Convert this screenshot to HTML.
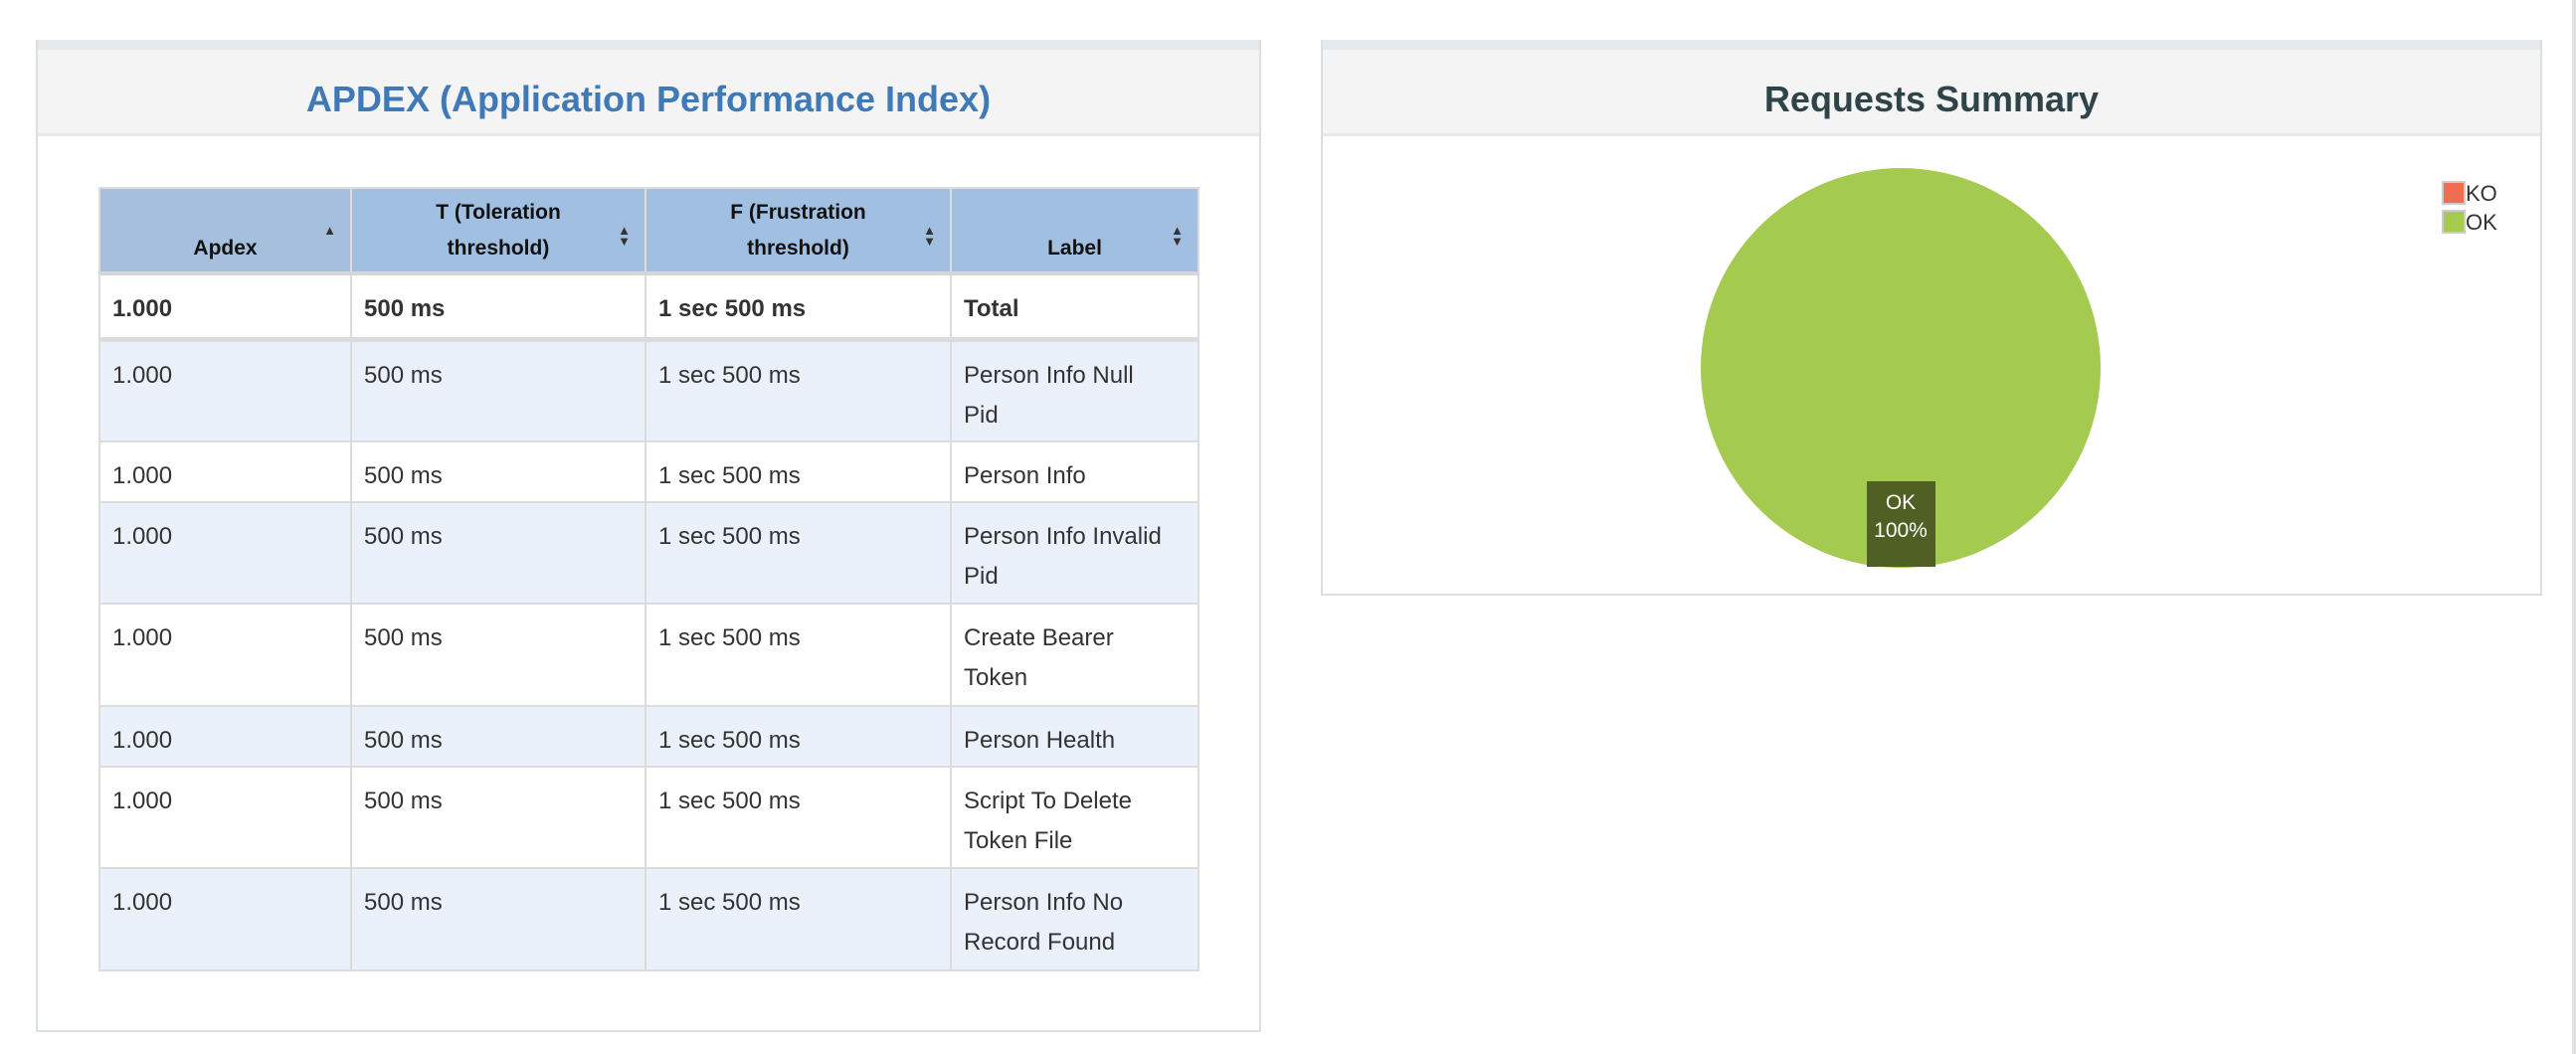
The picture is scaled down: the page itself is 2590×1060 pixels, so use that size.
<!DOCTYPE html>
<html><head><meta charset="utf-8"><style>
body{margin:0;width:2590px;height:1060px;background:#fff;font-family:"Liberation Sans",sans-serif;position:relative;overflow:hidden}
.panel{position:absolute;border:2px solid #dcdfe2;border-top:none;background:#fff;box-sizing:border-box}
.ptop{position:absolute;left:0;right:0;top:0;height:10px;background:#e6e9eb}
.phead{position:absolute;left:0;right:0;top:10px;height:84px;background:#f4f4f4;border-bottom:3px solid #e6e9eb;text-align:center;font-weight:bold;font-size:36px;line-height:100px;overflow:hidden}
table{position:absolute;left:61px;top:148px;border-collapse:collapse;table-layout:fixed;font-size:24px;color:#333}
td,th{border:2px solid #dcdcdc;padding:0 12px;vertical-align:top;text-align:left}
td:last-child{padding-right:30px}
th{background:#a0bfe1;font-size:21px;text-align:center;vertical-align:bottom;padding-bottom:5px;line-height:36px;position:relative;color:#111}
th:first-child{background:#a5bfdc}
td{padding-top:14px;line-height:40px}
tr.s td{background:#eaf1fa}
tr.t td{font-weight:bold;border-bottom:5px solid #dcdcdc}
thead th{border-bottom:4px solid #d6d6d6}
.ar{position:absolute;right:14px;top:36px;font-size:13px;line-height:11px;color:#333}
</style></head><body>
<div class="panel" style="left:36px;top:40px;width:1232px;height:998px">
<div class="ptop"></div>
<div class="phead" style="color:#3f7ab7">APDEX (Application Performance Index)</div>
<table>
<colgroup><col style="width:253px"><col style="width:296px"><col style="width:307px"><col style="width:249px"></colgroup>
<thead><tr style="height:86px"><th>Apdex<span class="ar">▲</span></th><th>T (Toleration<br>threshold)<span class="ar">▲<br>▼</span></th><th>F (Frustration<br>threshold)<span class="ar">▲<br>▼</span></th><th>Label<span class="ar">▲<br>▼</span></th></tr></thead>
<tbody>
<tr class="t" style="height:66px"><td>1.000</td><td>500 ms</td><td>1 sec 500 ms</td><td>Total</td></tr>
<tr class="s" style="height:103px"><td>1.000</td><td>500 ms</td><td>1 sec 500 ms</td><td>Person Info Null Pid</td></tr>
<tr style="height:61px"><td>1.000</td><td>500 ms</td><td>1 sec 500 ms</td><td>Person Info</td></tr>
<tr class="s" style="height:102px"><td>1.000</td><td>500 ms</td><td>1 sec 500 ms</td><td>Person Info Invalid Pid</td></tr>
<tr style="height:103px"><td>1.000</td><td>500 ms</td><td>1 sec 500 ms</td><td>Create Bearer Token</td></tr>
<tr class="s" style="height:61px"><td>1.000</td><td>500 ms</td><td>1 sec 500 ms</td><td>Person Health</td></tr>
<tr style="height:102px"><td>1.000</td><td>500 ms</td><td>1 sec 500 ms</td><td>Script To Delete Token File</td></tr>
<tr class="s" style="height:103px"><td>1.000</td><td>500 ms</td><td>1 sec 500 ms</td><td>Person Info No Record Found</td></tr>
</tbody></table>
</div>
<div class="panel" style="left:1328px;top:40px;width:1228px;height:559px">
<div class="ptop"></div>
<div class="phead" style="color:#2f4448">Requests Summary</div>
</div>
<svg style="position:absolute;left:0;top:0" width="2590" height="1060">
<circle cx="1911" cy="370" r="201" fill="#a5ca50"/>
<rect x="1877" y="484" width="69" height="86" fill="#506024"/>
<text x="1911" y="512" fill="#fff" font-family="Liberation Sans" font-size="21" text-anchor="middle">OK</text>
<text x="1911" y="540" fill="#fff" font-family="Liberation Sans" font-size="21" text-anchor="middle">100%</text>
<rect x="2456" y="183" width="22" height="22" fill="#ef6d53" stroke="#ccc" stroke-width="2"/>
<rect x="2456" y="212" width="22" height="22" fill="#a5ca50" stroke="#ccc" stroke-width="2"/>
<text x="2479" y="202" fill="#333" font-family="Liberation Sans" font-size="22">KO</text>
<text x="2479" y="231" fill="#333" font-family="Liberation Sans" font-size="22">OK</text>
<rect x="2586" y="0" width="4" height="1060" fill="#e0e0e0"/>
</svg>
</body></html>
